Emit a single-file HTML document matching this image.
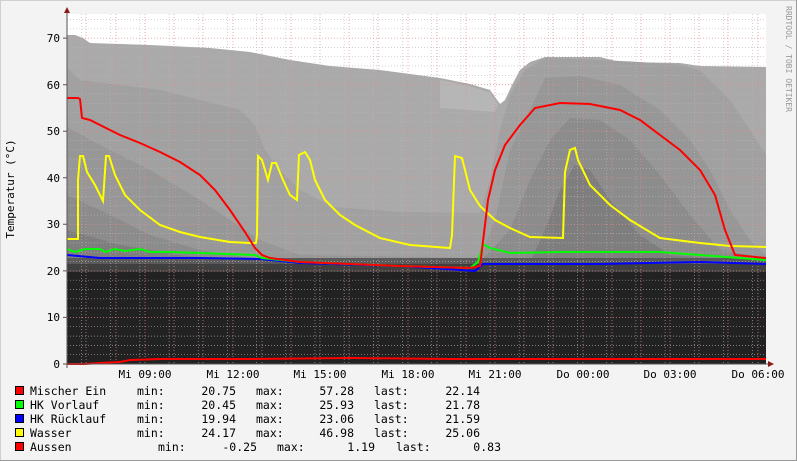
<!DOCTYPE html>
<html><head><meta charset="utf-8"><style>
html,body{margin:0;padding:0;background:#f3f3f3;}
svg{display:block;}
text{font-family:"DejaVu Sans Mono","Liberation Mono",monospace;}
</style></head><body>
<svg width="797" height="461" viewBox="0 0 797 461" xmlns="http://www.w3.org/2000/svg">
<rect x="0" y="0" width="797" height="461" fill="#f3f3f3"/>
<path d="M0.5 460V0.5H796" stroke="#cfcfcf" fill="none"/>
<path d="M796.5 0V460.5H0" stroke="#9a9a9a" fill="none"/>
<rect x="67" y="14" width="699" height="350" fill="#ffffff"/>
<polygon fill="#aaaaaa" points="67,35 75,35 83,38 90,43 150,45 210,48 250,52 290,60 330,66 380,70 440,78 470,84 490,90 500,104 505,100 512,85 520,70 530,62 545,57 600,57 620,62 680,63 700,66 766,67 766,272 67,272"/>
<polygon fill="#b6b6b6" points="440,80 470,86 490,93 498,104 495,112 440,108"/>
<polygon fill="#a1a1a1" points="67,68 80,80 120,85 160,90 200,100 240,110 255,125 265,150 280,170 300,190 333,207 400,212 480,213 490,180 500,130 510,95 525,70 545,58 600,60 640,62 680,65 700,70 730,100 750,130 766,155 766,272 67,272"/>
<polygon fill="#979797" points="67,127 100,145 150,170 200,200 230,220 260,240 300,255 480,258 495,220 510,150 530,110 545,78 580,76 620,85 660,110 690,140 710,170 730,210 750,240 766,255 766,272 67,272"/>
<polygon fill="#8c8c8c" points="67,195 100,210 150,235 200,250 250,258 480,262 510,230 530,180 550,140 570,118 600,120 630,140 660,175 690,215 720,250 766,258 766,272 67,272"/>
<polygon fill="#7e7e7e" points="67,230 120,245 180,255 250,262 530,262 545,230 560,190 575,165 590,170 610,200 640,235 670,255 766,262 766,272 67,272"/>
<rect x="67" y="258" width="699" height="8" fill="#5a5a5a"/>
<rect x="67" y="264" width="699" height="8" fill="#404040"/>
<rect x="67" y="272" width="699" height="92" fill="#222222"/>
<g stroke="#b8b8b8" stroke-width="0.7" stroke-dasharray="1,2" opacity="0.85">
<path d="M67 354.7H766M67 345.4H766M67 336.1H766M67 326.7H766M67 308.1H766M67 298.8H766M67 289.5H766M67 280.2H766M67 261.6H766M67 252.3H766M67 242.9H766M67 233.6H766M67 215H766M67 205.7H766M67 196.4H766M67 187.1H766M67 168.5H766M67 159.1H766M67 149.8H766M67 140.5H766M67 121.9H766M67 112.6H766M67 103.3H766M67 94H766M67 75.4H766M67 66H766M67 56.7H766M67 47.4H766M67 28.8H766M67 19.5H766"/>
<path d="M81.5 14V364M110.7 14V364M139.9 14V364M169.1 14V364M198.3 14V364M227.4 14V364M256.6 14V364M285.8 14V364M315 14V364M344.2 14V364M373.3 14V364M402.5 14V364M431.7 14V364M460.9 14V364M490 14V364M519.2 14V364M548.4 14V364M577.6 14V364M606.7 14V364M635.9 14V364M665.1 14V364M694.3 14V364M723.4 14V364M752.6 14V364"/>
</g>
<g stroke="#e08a8a" stroke-width="0.8" stroke-dasharray="1,2" opacity="0.9">
<path d="M67 317.4H766M67 270.9H766M67 224.3H766M67 177.8H766M67 131.2H766M67 84.7H766M67 38.1H766"/>
<path d="M86 14V364M116 14V364M145 14V364M174 14V364M203 14V364M233 14V364M262 14V364M291 14V364M320 14V364M349 14V364M378 14V364M408 14V364M437 14V364M466 14V364M495 14V364M524 14V364M553 14V364M583 14V364M612 14V364M641 14V364M670 14V364M699 14V364M728 14V364M758 14V364"/>
</g>
<g fill="none" stroke-width="2" stroke-linejoin="miter">
<polyline stroke="#ff0000" points="67,364 85,364 100,363 120,362 130,360 160,359 250,359 350,358 450,359 550,359 650,359 766,359"/>
<polyline stroke="#0000ff" points="67,255 100,258 200,258 260,259 300,263 400,266 475,271 483,264 500,264 600,264 700,262 766,264"/>
<polyline stroke="#00ff00" points="67,249 75,252 85,249 100,249 105,252 115,249 125,251 140,249 150,252 170,252 200,253 255,255 262,258 300,262 400,266 470,268 478,262 483,244 490,248 510,253 560,252 660,252 700,255 740,258 766,260"/>
<polyline stroke="#ffff00" points="67,239 78,239 78,180 80,156 83,156 87,172 95,185 103,201 106,156 109,156 115,175 125,195 140,210 160,225 180,232 200,237 230,242 250,243 256,243 257,235 258,156 262,160 268,180 272,163 276,163 283,180 290,195 297,200 299,155 305,152 310,160 315,180 325,200 340,215 355,225 380,238 410,245 450,248 452,235 455,156 462,158 470,190 480,206 495,220 510,228 530,237 563,238 565,172 570,150 575,148 578,160 590,185 610,205 630,220 660,238 700,243 730,246 766,247"/>
<polyline stroke="#ff0000" points="67,98 78,98 80,99 82,118 90,120 100,125 110,130 120,135 140,143 160,152 180,162 200,175 215,190 230,210 245,232 255,248 262,255 270,258 300,262 400,266 470,268 480,266 488,200 495,170 505,145 520,125 535,108 560,103 590,104 620,110 640,120 660,135 680,150 700,170 715,195 725,230 735,255 766,258"/>
</g>
<path d="M67 10V368M63 364H770" stroke="#555" stroke-width="1"/>
<polygon points="64,13 70,13 67,7" fill="#8b1a1a"/>
<polygon points="768,361 768,367 774,364" fill="#8b1a1a"/>
<g stroke="#555"><path d="M63 317.4H67M63 270.9H67M63 224.3H67M63 177.8H67M63 131.2H67M63 84.7H67M63 38.1H67"/></g>
<g font-size="11" fill="#000" text-anchor="end">
<text x="60" y="368">0</text>
<text x="60" y="321">10</text>
<text x="60" y="275">20</text>
<text x="60" y="228">30</text>
<text x="60" y="182">40</text>
<text x="60" y="135">50</text>
<text x="60" y="89">60</text>
<text x="60" y="42">70</text>
</g>
<text x="0" y="0" font-size="11" fill="#000" text-anchor="middle" transform="translate(14,189) rotate(-90)">Temperatur (°C)</text>
<text x="0" y="0" font-size="8" fill="#999" transform="translate(786,6) rotate(90)">RRDTOOL / TOBI OETIKER</text>
<g font-size="11" fill="#000" text-anchor="middle">
<text x="145" y="378">Mi 09:00</text>
<text x="233" y="378">Mi 12:00</text>
<text x="320" y="378">Mi 15:00</text>
<text x="408" y="378">Mi 18:00</text>
<text x="495" y="378">Mi 21:00</text>
<text x="583" y="378">Do 00:00</text>
<text x="670" y="378">Do 03:00</text>
<text x="758" y="378">Do 06:00</text>
</g>
<g stroke="#000" stroke-width="1">
<rect x="15.5" y="386.5" width="8" height="8" fill="#ff0000"/>
<rect x="15.5" y="400.5" width="8" height="8" fill="#00ff00"/>
<rect x="15.5" y="414.5" width="8" height="8" fill="#0000ff"/>
<rect x="15.5" y="428.5" width="8" height="8" fill="#ffff00"/>
<rect x="15.5" y="442.5" width="8" height="8" fill="#ff0000"/>
</g>
<g font-size="11.5" fill="#000">
<text x="30" y="395">Mischer Ein</text>
<text x="30" y="409">HK Vorlauf</text>
<text x="30" y="423">HK Rücklauf</text>
<text x="30" y="437">Wasser</text>
<text x="30" y="451">Aussen</text>
<text x="137" y="395">min:</text><text x="137" y="409">min:</text><text x="137" y="423">min:</text><text x="137" y="437">min:</text><text x="158" y="451">min:</text>
<text x="256" y="395">max:</text><text x="256" y="409">max:</text><text x="256" y="423">max:</text><text x="256" y="437">max:</text><text x="277" y="451">max:</text>
<text x="374" y="395">last:</text><text x="374" y="409">last:</text><text x="374" y="423">last:</text><text x="374" y="437">last:</text><text x="396" y="451">last:</text>
</g>
<g font-size="11.5" fill="#000" text-anchor="end">
<text x="236" y="395">20.75</text><text x="236" y="409">20.45</text><text x="236" y="423">19.94</text><text x="236" y="437">24.17</text><text x="257" y="451">-0.25</text>
<text x="354" y="395">57.28</text><text x="354" y="409">25.93</text><text x="354" y="423">23.06</text><text x="354" y="437">46.98</text><text x="375" y="451">1.19</text>
<text x="480" y="395">22.14</text><text x="480" y="409">21.78</text><text x="480" y="423">21.59</text><text x="480" y="437">25.06</text><text x="501" y="451">0.83</text>
</g>
</svg>
</body></html>
